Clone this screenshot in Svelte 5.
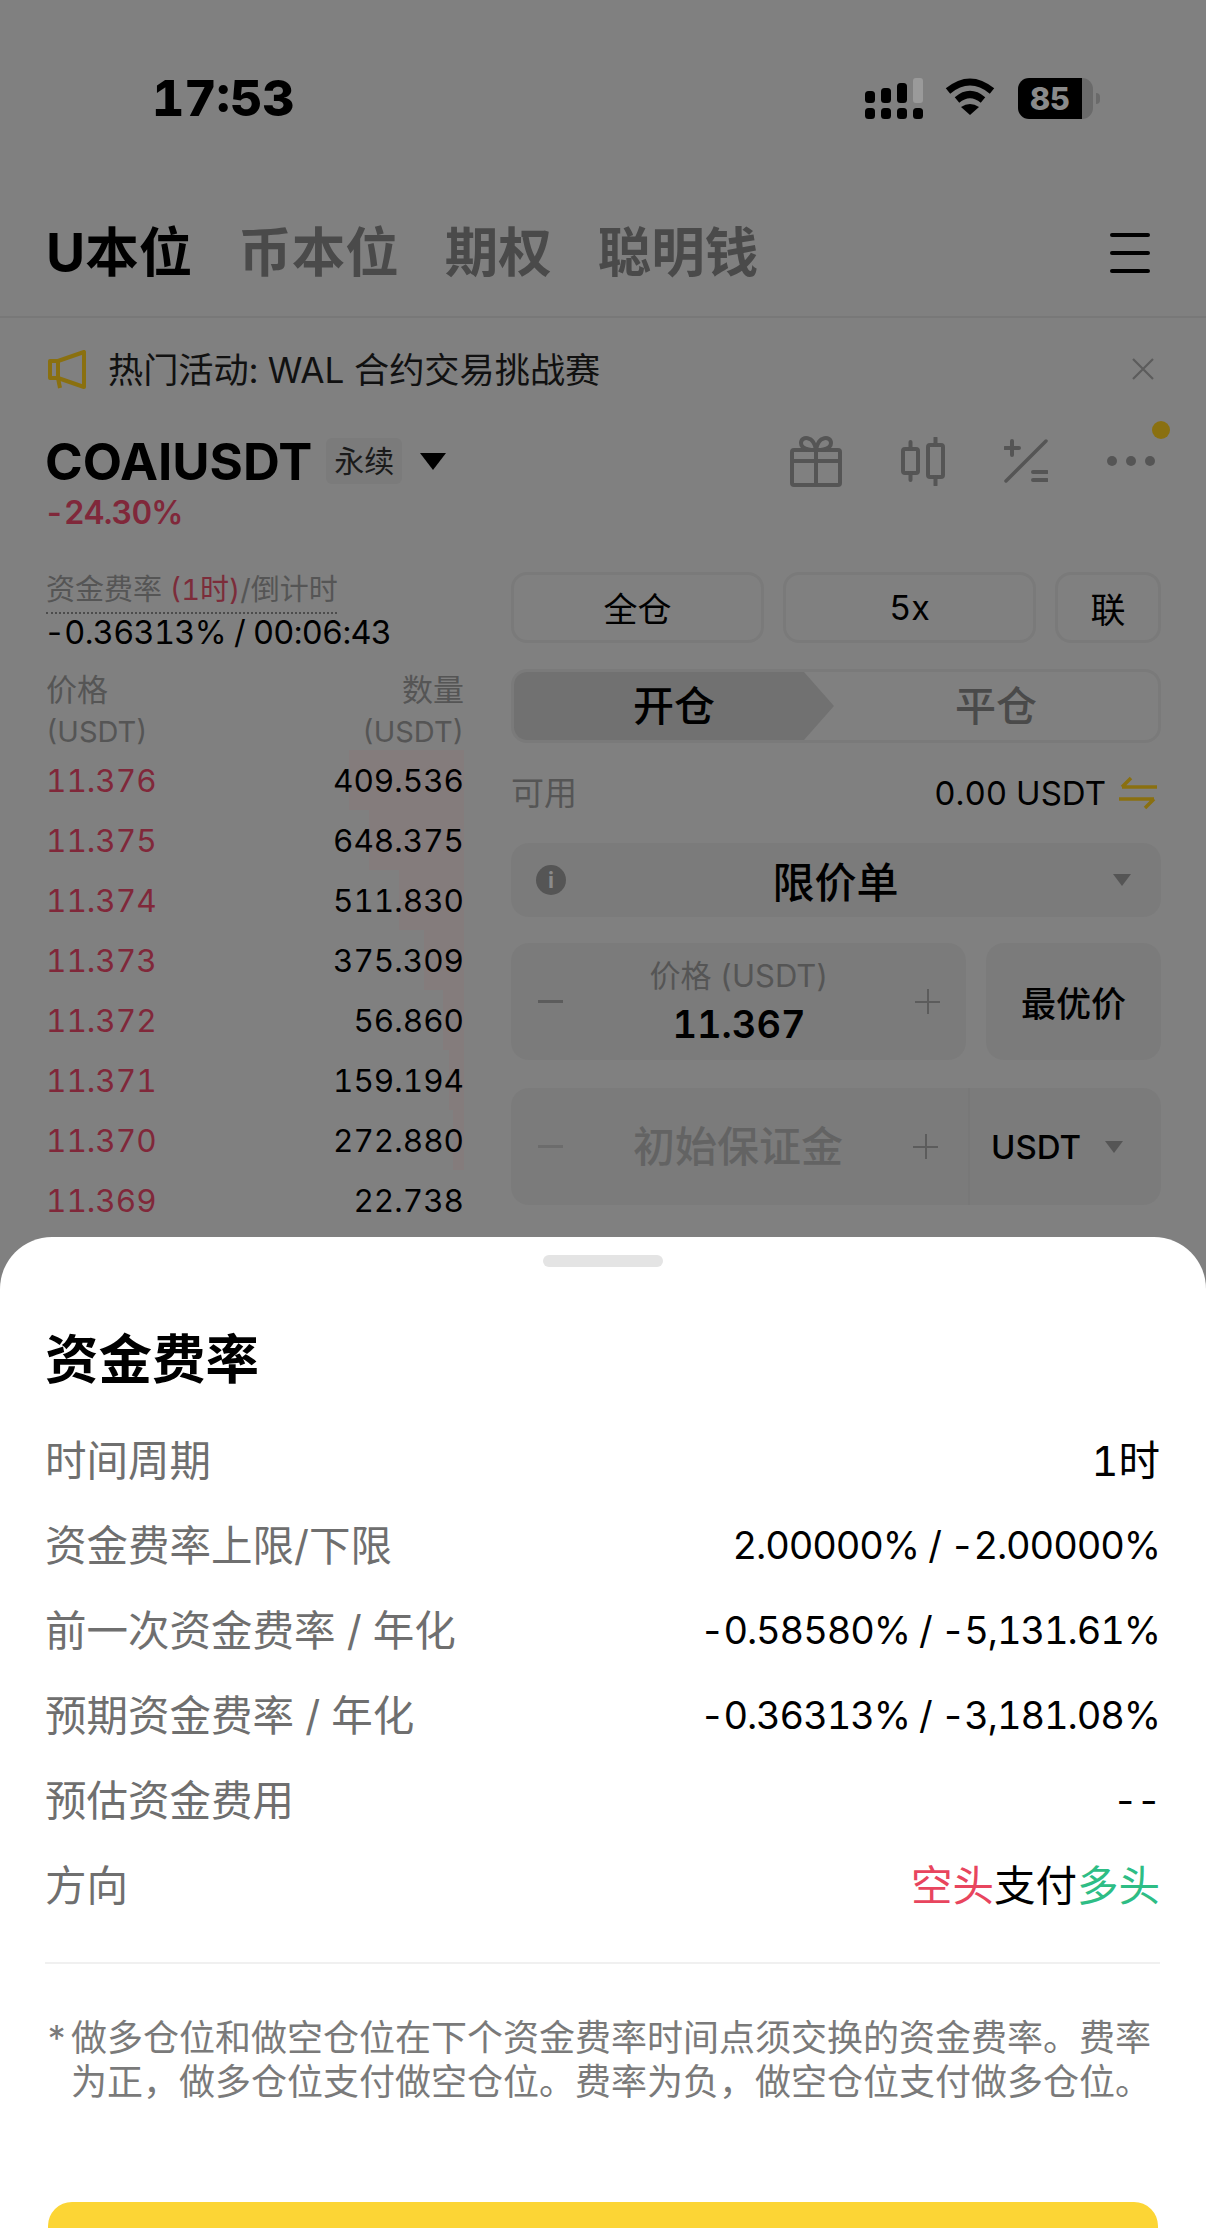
<script>
  const asks = [
    { price: "11.376", qty: "409.536", depth: 115 },
    { price: "11.375", qty: "648.375", depth: 95 },
    { price: "11.374", qty: "511.830", depth: 65 },
    { price: "11.373", qty: "375.309", depth: 40 },
    { price: "11.372", qty: "56.860", depth: 21 },
    { price: "11.371", qty: "159.194", depth: 15 },
    { price: "11.370", qty: "272.880", depth: 11 },
    { price: "11.369", qty: "22.738", depth: 0 },
  ];

  const tabs = ["币本位", "期权", "聪明钱"];

  const details = [
    { label: "时间周期", value: "1时" },
    { label: "资金费率上限/下限", value: "2.00000% / -2.00000%", num: true },
    { label: "前一次资金费率 / 年化", value: "-0.58580% / -5,131.61%", num: true },
    { label: "预期资金费率 / 年化", value: "-0.36313% / -3,181.08%", num: true },
    { label: "预估资金费用", value: "--", num: true },
  ];
</script>

<div class="page">
  <div class="status">
    <span class="time">17:53</span>
    <div class="status-icons">
      <svg class="signal" width="58" height="41" viewBox="0 0 58 41">
        <rect x="0" y="13" width="10" height="12" rx="3.5" fill="#000" />
        <rect x="16" y="10" width="10" height="15" rx="3.5" fill="#000" />
        <rect x="32" y="5" width="10" height="20" rx="3.5" fill="#000" />
        <rect x="48" y="0" width="10" height="25" rx="3" fill="#9a9a9a" />
        <rect x="0" y="30" width="10" height="11" rx="3.5" fill="#000" />
        <rect x="16" y="30" width="10" height="11" rx="3.5" fill="#000" />
        <rect x="32" y="30" width="10" height="11" rx="3.5" fill="#000" />
        <rect x="48" y="30" width="10" height="11" rx="3.5" fill="#000" />
      </svg>
      <svg class="wifi" width="50" height="37" viewBox="0 0 50 37">
        <path d="M3 13 Q25 -5 47 13" fill="none" stroke="#000" stroke-width="7" />
        <path d="M12 22 Q25 11 38 22" fill="none" stroke="#000" stroke-width="7" />
        <path d="M25 37 L16 29 Q25 23 34 29 Z" fill="#000" />
      </svg>
      <div class="battery">
        <span class="battery-fill">85</span>
        <span class="battery-end"></span>
        <span class="battery-tip"></span>
      </div>
    </div>
  </div>

  <div class="tabs">
    <span class="tab active">U本位</span>
    {#each tabs as tab}
      <span class="tab">{tab}</span>
    {/each}
    <div class="burger"><i></i><i></i><i></i></div>
  </div>

  <div class="notice">
    <svg class="notice-icon" width="38" height="39" viewBox="0 0 38 39" fill="none" stroke="#8a7010" stroke-width="4" stroke-linejoin="round">
      <path d="M2 11 H10 L36 2 V37 L10 28 H2 Z" />
      <path d="M10 28 L12 38" />
      <path d="M10 11 V28" />
    </svg>
    <span class="notice-text">热门活动: WAL 合约交易挑战赛</span>
    <svg class="notice-close" width="24" height="24" viewBox="0 0 24 24" stroke="#5c5c5c" stroke-width="2.2">
      <path d="M2 2 L22 22 M22 2 L2 22" />
    </svg>
  </div>

  <div class="symbol">
    <span class="symbol-name">COAIUSDT</span>
    <span class="chip">永续</span>
    <span class="symbol-caret"></span>
    <div class="symbol-tools">
      <svg width="52" height="52" viewBox="0 0 52 52" fill="none" stroke="#555" stroke-width="4">
        <rect x="2" y="15" width="48" height="35" rx="2" />
        <path d="M2 26 H50 M26 15 V50" />
        <path d="M26 15 C26 15 11 16 11 8 C11 1 24 0 26 15 C28 0 41 1 41 8 C41 16 26 15 26 15 Z" />
      </svg>
      <svg width="44" height="49" viewBox="0 0 44 49" fill="none" stroke="#555" stroke-width="4" stroke-linecap="round">
        <rect x="2" y="12" width="15" height="24" rx="2" />
        <path d="M9.5 5 V12 M9.5 36 V43" />
        <rect x="27" y="8" width="15" height="32" rx="2" />
        <path d="M34.5 1 V8 M34.5 40 V48" />
      </svg>
      <svg width="44" height="44" viewBox="0 0 44 44" fill="none" stroke="#555" stroke-width="4" stroke-linecap="round">
        <path d="M42 2 L2 42" stroke-width="3.5" />
        <path d="M1 9 H15 M8 2 V16" />
        <path d="M29 33 H43 M29 41 H43" />
      </svg>
      <div class="more">
        <i></i><i></i><i></i>
        <span class="more-badge"></span>
      </div>
    </div>
  </div>
  <div class="change">-24.30%</div>

  <div class="columns">
    <div class="book">
      <div class="funding-label">资金费率 <span class="funding-hour">(1时)</span>/倒计时</div>
      <div class="funding-value">-0.36313% / 00:06:43</div>
      <div class="book-head">
        <div>价格</div>
        <div>数量</div>
      </div>
      <div class="book-unit">
        <div>(USDT)</div>
        <div>(USDT)</div>
      </div>
      {#each asks as ask}
        <div class="ask">
          <span class="ask-depth" style="width: {ask.depth}px"></span>
          <span class="ask-price">{ask.price}</span>
          <span class="ask-qty">{ask.qty}</span>
        </div>
      {/each}
    </div>

    <div class="form">
      <div class="margin-btns">
        <span class="outline wide">全仓</span>
        <span class="outline wide">5x</span>
        <span class="outline small">联</span>
      </div>

      <div class="side">
        <span class="side-open">开仓</span>
        <span class="side-close">平仓</span>
      </div>

      <div class="avail">
        <span class="avail-label">可用</span>
        <span class="avail-value">0.00 USDT</span>
        <svg class="avail-swap" width="38" height="34" viewBox="0 0 38 34" fill="none" stroke="#8a7010" stroke-width="3.5">
          <path d="M38 11 H3 M12 2 L3 11" />
          <path d="M0 23 H35 M26 32 L35 23" />
        </svg>
      </div>

      <div class="field order-type">
        <span class="info">i</span>
        <span class="order-name">限价单</span>
        <span class="caret"></span>
      </div>

      <div class="price-row">
        <div class="field stepper">
          <span class="minus"></span>
          <div class="stepper-main">
            <span class="stepper-label">价格 (USDT)</span>
            <span class="stepper-value">11.367</span>
          </div>
          <span class="plus"></span>
        </div>
        <div class="field best">最优价</div>
      </div>

      <div class="field margin-row">
        <div class="margin-input">
          <span class="minus faint"></span>
          <span class="margin-placeholder">初始保证金</span>
          <span class="plus"></span>
        </div>
        <div class="unit-pick">
          <span>USDT</span>
          <span class="caret"></span>
        </div>
      </div>
    </div>
  </div>

  <div class="sheet">
    <div class="handle"></div>
    <h2>资金费率</h2>
    {#each details as row}
      <div class="detail">
        <span class="detail-label">{row.label}</span>
        <span class="detail-value" class:num={row.num}>{row.value}</span>
      </div>
    {/each}
    <div class="detail">
      <span class="detail-label">方向</span>
      <span class="detail-value"><span class="short">空头</span>支付<span class="long">多头</span></span>
    </div>
    <div class="sheet-line"></div>
    <div class="footnote">
      <span class="star">*</span>
      <p>做多仓位和做空仓位在下个资金费率时间点须交换的资金费率。费率为正，做多仓位支付做空仓位。费率为负，做空仓位支付做多仓位。</p>
    </div>
    <div class="confirm"></div>
  </div>
</div>

<style>
  :global(body) {
    margin: 0;
    background: #808080;
  }

  .page {
    position: relative;
    width: 1206px;
    height: 2228px;
    overflow: hidden;
    background: #808080;
    color: #000;
    font-family: Inter, "Noto Sans CJK SC", sans-serif;
    font-feature-settings: "tnum";
  }

  .status {
    display: flex;
    align-items: center;
    justify-content: space-between;
    box-sizing: border-box;
    height: 196px;
    padding: 0 113px 0 152px;
  }
  .time {
    font-size: 50px;
    font-weight: 800;
  }
  .status-icons {
    display: flex;
    align-items: center;
    gap: 22px;
  }
  .wifi {
    margin-top: -4px;
  }
  .battery {
    position: relative;
    display: flex;
    width: 75px;
    height: 41px;
    margin-left: 1px;
  }
  .battery-fill {
    width: 64px;
    background: #000;
    border-radius: 11px 0 0 11px;
    color: #8a8a8a;
    font-size: 31px;
    font-weight: 800;
    line-height: 41px;
    text-align: center;
  }
  .battery-end {
    width: 11px;
    background: #6a6a6a;
    border-radius: 0 11px 11px 0;
  }
  .battery-tip {
    position: absolute;
    right: -7px;
    top: 15px;
    width: 4px;
    height: 11px;
    background: #6a6a6a;
    border-radius: 0 4px 4px 0;
  }

  .tabs {
    display: flex;
    align-items: center;
    gap: 46px;
    box-sizing: border-box;
    height: 122px;
    padding: 0 56px 6px 46px;
    border-bottom: 2px solid #787878;
  }
  .tab {
    font-size: 53.5px;
    font-weight: 700;
    color: #4a4a4a;
    line-height: 64px;
  }
  .tab.active {
    color: #000;
  }
  .burger {
    display: flex;
    flex-direction: column;
    gap: 14px;
    margin-left: auto;
  }
  .burger i {
    display: block;
    width: 40px;
    height: 4px;
    background: #000;
    border-radius: 2px;
  }

  .notice {
    display: flex;
    align-items: center;
    box-sizing: border-box;
    height: 106px;
    padding: 0 51px 8px 48px;
  }
  .notice-icon {
    margin-top: 5px;
  }
  .notice-text {
    margin-left: 22px;
    font-size: 35.2px;
    color: #111;
  }
  .notice-close {
    margin-top: 4px;
    margin-left: auto;
  }

  .symbol {
    display: flex;
    align-items: center;
    box-sizing: border-box;
    height: 74px;
    padding: 0 51px 0 45px;
  }
  .symbol-name {
    font-size: 51px;
    font-weight: 700;
  }
  .chip {
    margin-left: 14px;
    padding: 3px 8px;
    border-radius: 6px;
    background: #7b7b7b;
    font-size: 30px;
    line-height: 40px;
    color: #1a1a1a;
  }
  .symbol-caret {
    width: 0;
    height: 0;
    margin-left: 18px;
    border-left: 13px solid transparent;
    border-right: 13px solid transparent;
    border-top: 17px solid #000;
  }
  .symbol-tools {
    display: flex;
    align-items: center;
    gap: 59px;
    margin-left: auto;
  }
  .more {
    position: relative;
    display: flex;
    gap: 9px;
  }
  .more i {
    display: block;
    width: 10px;
    height: 10px;
    background: #555;
    border-radius: 50%;
  }
  .more-badge {
    position: absolute;
    right: -15px;
    top: -35px;
    width: 18px;
    height: 18px;
    background: #8a7010;
    border-radius: 50%;
  }

  .change {
    box-sizing: border-box;
    height: 74px;
    padding-left: 44px;
    color: #80283a;
    font-size: 32px;
    font-weight: 600;
    letter-spacing: -0.8px;
    line-height: 30px;
  }

  .columns {
    display: flex;
    gap: 47px;
    padding-left: 46px;
  }

  .book {
    flex: 0 0 418px;
  }
  .funding-label {
    box-sizing: border-box;
    width: 291px;
    height: 42px;
    border-bottom: 2px dotted #4c4c4c;
    color: #555;
    font-size: 29px;
    line-height: 36px;
    white-space: nowrap;
  }
  .funding-hour {
    color: #7c2c3a;
  }
  .funding-value {
    margin-left: -2px;
    font-size: 32.5px;
    letter-spacing: -0.7px;
    line-height: 38px;
    white-space: nowrap;
  }
  .book-head,
  .book-unit {
    display: flex;
    justify-content: space-between;
    color: #555;
  }
  .book-head {
    margin-top: 18px;
    font-size: 31px;
    line-height: 40px;
  }
  .book-unit {
    margin-top: 4px;
    height: 36px;
    font-size: 29px;
    line-height: 36px;
  }
  .ask {
    position: relative;
    display: flex;
    align-items: center;
    justify-content: space-between;
    height: 60px;
    font-size: 31.5px;
  }
  .ask-depth {
    position: absolute;
    right: 0;
    top: 0;
    bottom: 0;
    background: #847c7c;
  }
  .ask-price {
    position: relative;
    color: #80283a;
  }
  .ask-qty {
    position: relative;
  }

  .form {
    flex: 0 0 650px;
    display: flex;
    flex-direction: column;
  }
  .margin-btns {
    display: flex;
    gap: 19px;
  }
  .outline {
    display: flex;
    align-items: center;
    justify-content: center;
    box-sizing: border-box;
    height: 71px;
    border: 3px solid #7a7a7a;
    border-radius: 16px;
    font-size: 35px;
  }
  .outline.wide {
    flex: 0 0 253px;
    font-size: 34px;
  }
  .outline.small {
    flex: 1;
  }

  .side {
    display: flex;
    box-sizing: border-box;
    height: 74px;
    margin-top: 26px;
    border: 3px solid #7a7a7a;
    border-radius: 16px;
    overflow: hidden;
    font-size: 41px;
    line-height: 68px;
    text-align: center;
  }
  .side-open {
    flex: 0 0 320px;
    background: #717171;
    font-weight: 500;
    clip-path: polygon(0 0, calc(100% - 30px) 0, 100% 50%, calc(100% - 30px) 100%, 0 100%);
  }
  .side-close {
    flex: 1;
    color: #4a4a4a;
    font-weight: 500;
  }

  .avail {
    display: flex;
    align-items: center;
    height: 100px;
    font-size: 33px;
  }
  .avail-label {
    margin-top: -4px;
    color: #555;
  }
  .avail-value {
    margin-left: auto;
    margin-right: 13px;
  }
  .avail-swap {
    margin-right: 4px;
  }

  .field {
    background: #7b7b7b;
    border-radius: 18px;
  }
  .order-type {
    display: flex;
    align-items: center;
    height: 74px;
    padding: 0 30px 0 25px;
  }
  .info {
    width: 30px;
    height: 30px;
    background: #555;
    border-radius: 50%;
    color: #8a8a8a;
    font-size: 22px;
    font-weight: 700;
    line-height: 30px;
    text-align: center;
  }
  .order-name {
    flex: 1;
    padding-right: 8px;
    padding-bottom: 2px;
    text-align: center;
    font-size: 42px;
    font-weight: 500;
  }
  .caret {
    width: 0;
    height: 0;
    border-left: 9px solid transparent;
    border-right: 9px solid transparent;
    border-top: 12px solid #555;
  }

  .price-row {
    display: flex;
    gap: 20px;
    margin-top: 26px;
  }
  .stepper {
    flex: 0 0 455px;
    display: flex;
    align-items: center;
    box-sizing: border-box;
    height: 117px;
    padding: 0 26px 0 27px;
  }
  .stepper-main {
    flex: 1;
    display: flex;
    flex-direction: column;
    align-items: center;
    margin-top: -4px;
  }
  .stepper-label {
    color: #555;
    font-size: 31px;
    line-height: 48px;
  }
  .stepper-value {
    font-size: 38px;
    font-weight: 600;
    line-height: 48px;
  }
  .minus {
    width: 25px;
    height: 3px;
    background: #5c5c5c;
  }
  .minus.faint {
    background: #6c6c6c;
  }
  .plus {
    width: 25px;
    height: 25px;
    background:
      linear-gradient(#5c5c5c, #5c5c5c) center / 25px 2px no-repeat,
      linear-gradient(#5c5c5c, #5c5c5c) center / 2px 25px no-repeat;
  }
  .best {
    flex: 1;
    display: flex;
    align-items: center;
    justify-content: center;
    font-size: 35px;
    font-weight: 500;
  }

  .margin-row {
    display: flex;
    height: 117px;
    margin-top: 28px;
  }
  .margin-input {
    flex: 0 0 459px;
    display: flex;
    align-items: center;
    box-sizing: border-box;
    padding: 0 30px 0 27px;
    border-right: 2px solid #787878;
  }
  .margin-placeholder {
    flex: 1;
    padding-bottom: 6px;
    text-align: center;
    color: #636363;
    font-size: 42px;
    font-weight: 500;
  }
  .unit-pick {
    flex: 1;
    display: flex;
    align-items: center;
    gap: 24px;
    padding-left: 21px;
    font-size: 33px;
    font-weight: 500;
  }

  .sheet {
    position: absolute;
    left: 0;
    right: 0;
    top: 1237px;
    bottom: 0;
    box-sizing: border-box;
    padding: 18px 46px 0 45px;
    background: #fff;
    border-radius: 52px 52px 0 0;
  }
  .handle {
    width: 120px;
    height: 12px;
    margin: 0 auto;
    background: #e4e4e4;
    border-radius: 6px;
  }
  h2 {
    margin: 57px 0 18px;
    font-size: 53.5px;
    font-weight: 700;
    line-height: 72px;
  }
  .detail {
    display: flex;
    justify-content: space-between;
    align-items: center;
    box-sizing: border-box;
    height: 85px;
    padding-top: 2px;
    font-size: 41.5px;
    white-space: nowrap;
  }
  .detail-label {
    color: #6f6f6f;
  }
  .detail-value.num {
    padding-top: 4px;
    font-size: 38px;
    letter-spacing: -1.1px;
  }
  .short {
    color: #e8455e;
  }
  .long {
    color: #2ebd85;
  }
  .sheet-line {
    height: 2px;
    margin-top: 38px;
    background: #f0f0f0;
  }
  .footnote {
    display: flex;
    margin-top: 52px;
    color: #7a7a7a;
    font-size: 36px;
    line-height: 44px;
  }
  .star {
    flex: 0 0 26px;
  }
  .footnote p {
    margin: 0;
  }
  .confirm {
    position: absolute;
    left: 48px;
    right: 48px;
    top: 965px;
    height: 60px;
    background: #fcd535;
    border-radius: 24px 24px 0 0;
  }
</style>
